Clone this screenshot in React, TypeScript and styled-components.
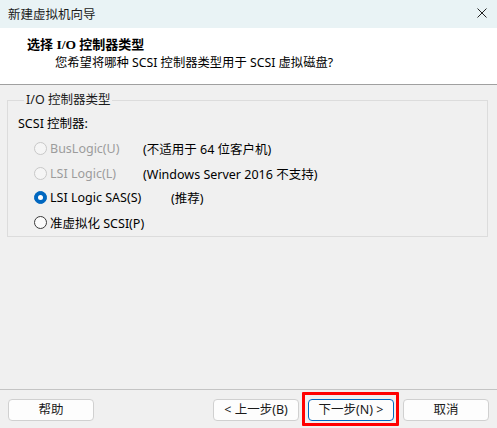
import React from "react";
import styled, { createGlobalStyle } from "styled-components";

const Global = createGlobalStyle`
  html, body { margin: 0; padding: 0; background: #f0f0f0; }
  body { font-family: "Noto Sans", "Noto Sans CJK SC", sans-serif; font-size: 12.5px; color: #000; }
  * { box-sizing: border-box; }
`;

const Window = styled.div`
  width: 497px;
  height: 428px;
  display: flex;
  flex-direction: column;
  background: #f0f0f0;
  overflow: hidden;
`;

const TitleBar = styled.div`
  height: 28px;
  background: #e9f3f5;
  display: flex;
  align-items: center;
  justify-content: space-between;
  padding: 0 10px 2px 8px;
  font-family: "Noto Sans CJK SC", sans-serif;
  font-size: 12.5px;
  color: #1a1a1a;
`;

const CloseIcon = styled.svg`
  width: 10px;
  height: 10px;
`;

const Header = styled.div`
  height: 57px;
  background: #fff;
  border-bottom: 1px solid #a0a0a0;
  padding: 7px 0 0 27px;
  display: flex;
  flex-direction: column;
  gap: 1px;
`;

const HeaderTitle = styled.div`
  font-family: "Liberation Serif", "Noto Sans CJK SC", serif;
  font-weight: bold;
  font-size: 13.5px;
  line-height: 17px;
  & span { font-family: "Noto Sans CJK SC", sans-serif; font-size: 13px; }
`;

const HeaderSub = styled.div`
  padding-left: 28px;
  font-family: "Noto Sans", "Noto Sans CJK SC", sans-serif;
  font-size: 12.3px;
  line-height: 17px;
`;

const Body = styled.div`
  flex: 1;
  padding: 7px 9px 0 7px;
`;

const Group = styled.fieldset`
  margin: 0;
  padding: 7px 10px 7px 10px;
  border: 1px solid #dcdcdc;
  border-radius: 0;
  height: 145px;
`;

const Legend = styled.legend`
  padding: 0 2px;
  margin-left: 6px;
  font-size: 12.5px;
  line-height: 16px;
  color: #1a1a1a;
`;

const SubLabel = styled.div`
  line-height: 17px;
  margin-bottom: 7px;
`;

const Rows = styled.div`
  display: flex;
  flex-direction: column;
  gap: 7.5px;
`;

const Row = styled.label`
  display: grid;
  grid-template-columns: 109px 1fr;
  align-items: center;
  height: 17px;
  padding-left: 16px;
`;

const RadioWrap = styled.span<{ $disabled?: boolean }>`
  display: flex;
  align-items: center;
  gap: 3px;
  white-space: nowrap;
  color: ${(p) => (p.$disabled ? "#9c9c9c" : "#000")};
`;

const Circle = styled.span<{ $state: "disabled" | "on" | "off" }>`
  width: 13px;
  height: 13px;
  border-radius: 50%;
  flex: none;
  border: 1px solid
    ${(p) => (p.$state === "disabled" ? "#c8c8c8" : p.$state === "on" ? "#0067c0" : "#3a3a3a")};
  background: ${(p) => (p.$state === "on" ? "#0067c0" : p.$state === "disabled" ? "#f5f5f5" : "#fbfbfb")};
  display: flex;
  align-items: center;
  justify-content: center;
  &::after {
    content: "";
    display: ${(p) => (p.$state === "on" ? "block" : "none")};
    width: 5px;
    height: 5px;
    border-radius: 50%;
    background: #fff;
  }
`;

const Note = styled.span<{ $offset?: number }>`
  color: #000;
  white-space: nowrap;
  padding-left: ${(p) => p.$offset ?? 0}px;
`;

const Footer = styled.div`
  border-top: 1px solid #c4c4c4;
  height: 39px;
  padding: 9px 8px 0 8px;
  display: flex;
  align-items: flex-start;
`;

const Button = styled.button<{ $primary?: boolean }>`
  width: 86px;
  height: 22px;
  padding: 0;
  border-radius: 4px;
  background: #fdfdfd;
  border: 1px solid ${(p) => (p.$primary ? "#0067c0" : "#d0d0d0")};
  font-family: "Noto Sans", "Noto Sans CJK SC", sans-serif;
  font-size: 12.5px;
  color: #1a1a1a;
  line-height: 18px;
`;

const Highlight = styled.span`
  position: relative;
  display: inline-flex;
  &::after {
    content: "";
    position: absolute;
    left: -6px;
    right: -5px;
    top: -7px;
    bottom: -5px;
    border: 3px solid #ff0000;
    border-radius: 1px;
    pointer-events: none;
  }
`;

const Spacer = styled.div`
  flex: 1;
`;

const ButtonGroup = styled.div`
  display: flex;
  gap: 9px;
`;

type Option = { label: string; note?: string; state: "disabled" | "on" | "off"; noteOffset?: number };

const options: Option[] = [
  { label: "BusLogic(U)", note: "(不适用于 64 位客户机)", state: "disabled" },
  { label: "LSI Logic(L)", note: "(Windows Server 2016 不支持)", state: "disabled" },
  { label: "LSI Logic SAS(S)", note: "(推荐)", state: "on", noteOffset: 28 },
  { label: "准虚拟化 SCSI(P)", state: "off" },
];

export default function App() {
  return (
    <>
      <Global />
      <Window>
        <TitleBar>
          <span>新建虚拟机向导</span>
          <CloseIcon viewBox="0 0 10 10">
            <path d="M0.5 0.5 L9.5 9.5 M9.5 0.5 L0.5 9.5" stroke="#222" strokeWidth="1" />
          </CloseIcon>
        </TitleBar>
        <Header>
          <HeaderTitle>
            <span>选择</span> I/O <span>控制器类型</span>
          </HeaderTitle>
          <HeaderSub>您希望将哪种 SCSI 控制器类型用于 SCSI 虚拟磁盘?</HeaderSub>
        </Header>
        <Body>
          <Group>
            <Legend>I/O 控制器类型</Legend>
            <SubLabel>SCSI 控制器:</SubLabel>
            <Rows>
              {options.map((o) => (
                <Row key={o.label}>
                  <RadioWrap $disabled={o.state === "disabled"}>
                    <Circle $state={o.state} />
                    {o.label}
                  </RadioWrap>
                  {o.note ? <Note $offset={o.noteOffset}>{o.note}</Note> : <span />}
                </Row>
              ))}
            </Rows>
          </Group>
        </Body>
        <Footer>
          <Button>帮助</Button>
          <Spacer />
          <ButtonGroup>
            <Button>&lt; 上一步(B)</Button>
            <Highlight>
              <Button $primary>下一步(N) &gt;</Button>
            </Highlight>
            <Button>取消</Button>
          </ButtonGroup>
        </Footer>
      </Window>
    </>
  );
}
